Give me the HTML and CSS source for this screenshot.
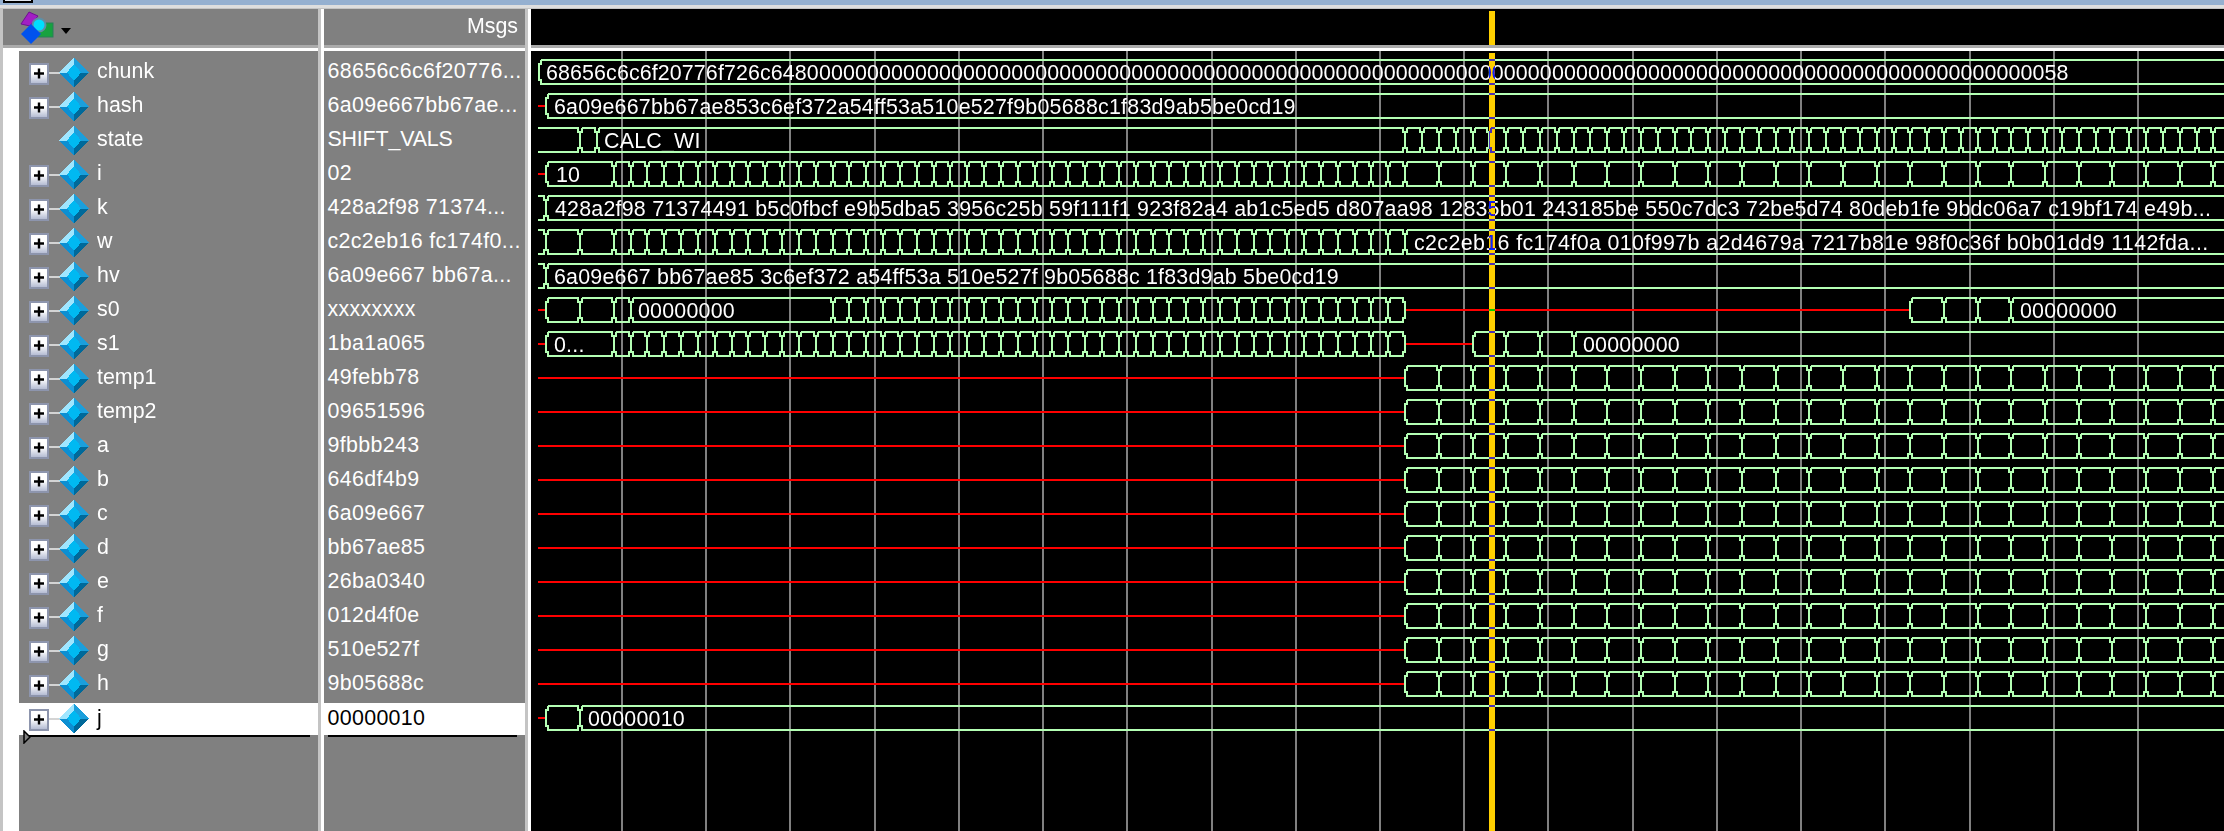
FILE: index.html
```html
<!DOCTYPE html>
<html lang="en">
<head>
    <meta charset="UTF-8">
    <title>Wave</title>
    <link rel="stylesheet" href="styles.css">
</head>
<body>
    <svg class="defs">
        <defs>
            <linearGradient id="boxFill" x1="0" y1="0" x2="0" y2="1">
                <stop offset="0.45" stop-color="#ffffff"/>
                <stop offset="1" stop-color="#aeb6cf"/>
            </linearGradient>
            <symbol id="gem" viewBox="0 0 60 34">
                <g shape-rendering="crispEdges">
                    <polygon points="45,2 30,17.5 38,17.5 45,9" fill="#9fe6ff"/>
                    <polygon points="45,2 60,17.5 52,17.5 45,9" fill="#1b9fdc"/>
                    <polygon points="30,17.5 45,33 45,26 38,17.5" fill="#0d8fd2"/>
                    <polygon points="60,17.5 45,33 45,26 52,17.5" fill="#00699a"/>
                    <polygon points="45,9 52,17.5 45,26 38,17.5" fill="#00b9f2"/>
                </g>
            </symbol>
            <symbol id="gem-plus" viewBox="0 0 60 34">
                <rect x="20" y="17" width="11" height="2" fill="#d4d4d4"/>
                <rect x="1" y="9" width="18" height="20" fill="url(#boxFill)" stroke="#8d95ad" stroke-width="2"/>
                <path d="M5 18.5H15M10 13.5V23.5" stroke="#000" stroke-width="2.4" fill="none"/>
                <use href="#gem"/>
            </symbol>
        </defs>
    </svg>

    <div class="titlebar"><div class="tab"></div></div>

    <div class="panes">
        <section class="col col-names">
            <header class="col-head">
                <svg class="layers" width="56" height="36" viewBox="18 9 56 36">
                    <polygon points="21,23 29,11 38,15 30,25" fill="#a21fc4" stroke="#6d1290"/>
                    <rect x="38" y="22" width="15" height="14" fill="#17a23f" stroke="#2a7f58"/>
                    <circle cx="39" cy="24" r="6.5" fill="#00dfff" stroke="#5f8ea5" stroke-width="2"/>
                    <polygon points="31,23 41,33 31,43 21,33" fill="#0052ee"/>
                    <polygon points="61,27 71,27 66,33" fill="#000"/>
                </svg>
            </header>
            <div class="rule"></div>
            <div class="rows">
                <div class="row"><svg class="sig"><use href="#gem-plus"/></svg>chunk</div>
                <div class="row"><svg class="sig"><use href="#gem-plus"/></svg>hash</div>
                <div class="row"><svg class="sig"><use href="#gem"/></svg>state</div>
                <div class="row"><svg class="sig"><use href="#gem-plus"/></svg>i</div>
                <div class="row"><svg class="sig"><use href="#gem-plus"/></svg>k</div>
                <div class="row"><svg class="sig"><use href="#gem-plus"/></svg>w</div>
                <div class="row"><svg class="sig"><use href="#gem-plus"/></svg>hv</div>
                <div class="row"><svg class="sig"><use href="#gem-plus"/></svg>s0</div>
                <div class="row"><svg class="sig"><use href="#gem-plus"/></svg>s1</div>
                <div class="row"><svg class="sig"><use href="#gem-plus"/></svg>temp1</div>
                <div class="row"><svg class="sig"><use href="#gem-plus"/></svg>temp2</div>
                <div class="row"><svg class="sig"><use href="#gem-plus"/></svg>a</div>
                <div class="row"><svg class="sig"><use href="#gem-plus"/></svg>b</div>
                <div class="row"><svg class="sig"><use href="#gem-plus"/></svg>c</div>
                <div class="row"><svg class="sig"><use href="#gem-plus"/></svg>d</div>
                <div class="row"><svg class="sig"><use href="#gem-plus"/></svg>e</div>
                <div class="row"><svg class="sig"><use href="#gem-plus"/></svg>f</div>
                <div class="row"><svg class="sig"><use href="#gem-plus"/></svg>g</div>
                <div class="row"><svg class="sig"><use href="#gem-plus"/></svg>h</div>
                <div class="row sel"><svg class="sig"><use href="#gem-plus"/></svg>j</div>
                <div class="drop-line"></div>
                <svg class="drop-mark" width="8" height="14" viewBox="0 0 8 14"><polygon points="1,1 7,7 1,13" fill="#808080" stroke="#000" stroke-width="1.5"/></svg>
            </div>
        </section>
        <div class="sash"></div>
        <section class="col col-values">
            <header class="col-head msgs">Msgs</header>
            <div class="rule"></div>
            <div class="rows">
                <div class="row">68656c6c6f20776...</div>
                <div class="row">6a09e667bb67ae...</div>
                <div class="row caps">SHIFT_VALS</div>
                <div class="row">02</div>
                <div class="row">428a2f98 71374...</div>
                <div class="row">c2c2eb16 fc174f0...</div>
                <div class="row">6a09e667 bb67a...</div>
                <div class="row">xxxxxxxx</div>
                <div class="row">1ba1a065</div>
                <div class="row">49febb78</div>
                <div class="row">09651596</div>
                <div class="row">9fbbb243</div>
                <div class="row">646df4b9</div>
                <div class="row">6a09e667</div>
                <div class="row">bb67ae85</div>
                <div class="row">26ba0340</div>
                <div class="row">012d4f0e</div>
                <div class="row">510e527f</div>
                <div class="row">9b05688c</div>
                <div class="row sel">00000010</div>
                <div class="drop-line"></div>
            </div>
        </section>
        <div class="sash"></div>
        <section class="col col-wave">
            <header class="wave-head"><div class="cursor-top"></div></header>
            <div class="rule"></div>
            <svg id="wave" width="1693" height="780" viewBox="531 51 1693 780"></svg>
        </section>
    </div>

    <script src="script.js"></script>
</body>
</html>
```

FILE: styles.css
```css
body {
    margin: 0;
    width: 2224px;
    height: 831px;
    overflow: hidden;
    background-color: #c4c4c4;
    font-family: "Liberation Sans", Arial, sans-serif;
    font-size: 21.4px;
    color: #fff;
}
.defs {
    position: absolute;
    width: 0;
    height: 0;
}
.titlebar {
    height: 5px;
    background-color: #95b0d0;
    border-bottom: 3px solid #dedede;
    margin-bottom: 1px;
}
.tab {
    width: 26px;
    height: 1px;
    margin-left: 3px;
    background-color: #dfe6ee;
    border: 2px solid #000;
    border-top: none;
}
.panes {
    display: flex;
    height: 822px;
    padding-left: 3px;
}
.col {
    display: flex;
    flex-direction: column;
}
.col-names {
    width: 316px;
    background-color: #fff;
}
.col-values {
    width: 201px;
    letter-spacing: 0.35px;
}
.col-wave {
    width: 1693px;
    background-color: #000;
}
.sash {
    box-sizing: border-box;
    width: 6px;
    background-color: #fff;
    border-left: 3px solid #c4c4c4;
}
.col-head {
    display: flex;
    align-items: center;
    height: 36px;
    background-color: #808080;
}
.layers {
    margin-left: 15px;
    margin-top: 1px;
}
.msgs {
    justify-content: flex-end;
    padding-right: 7px;
    padding-bottom: 2px;
    box-sizing: border-box;
    letter-spacing: 0;
}
.wave-head {
    height: 36px;
    background-color: #000;
    padding-left: 958px;
    padding-top: 2px;
    box-sizing: border-box;
}
.cursor-top {
    width: 6px;
    height: 34px;
    background-color: #ffd000;
}
.rule {
    height: 3px;
    background-color: #ababab;
    border-bottom: 3px solid #fff;
}
.rows {
    position: relative;
    flex: 1;
    padding-top: 4px;
    background-color: #808080;
}
.col-names .rows {
    margin-left: 16px;
}
.row {
    display: flex;
    align-items: center;
    box-sizing: border-box;
    height: 34px;
    padding-bottom: 2px;
    white-space: nowrap;
}
.col-names .row {
    padding-left: 10px;
}
.col-values .row {
    padding-left: 3px;
}
.col-values .caps {
    letter-spacing: -0.15px;
}
.sig {
    flex: none;
    align-self: flex-start;
    width: 60px;
    height: 34px;
    margin-right: 8px;
}
.row.sel {
    height: 32px;
    margin-top: 2px;
    background-color: #fff;
    color: #000;
}
.sel .sig {
    margin-top: -2px;
}
.drop-line {
    height: 2px;
    margin: 0 8px 0 4px;
    background-color: #000;
}
.col-names .drop-line {
    margin: 0 8px;
}
.drop-mark {
    position: absolute;
    left: 4px;
    top: 679px;
}
#wave {
    display: block;
}
#wave text {
    font-family: "Liberation Sans", Arial, sans-serif;
    font-size: 21.4px;
    fill: #fff;
    letter-spacing: 0.22px;
}
#wave text.dense {
    letter-spacing: 0.12px;
}
#wave text.wide {
    letter-spacing: 0.38px;
}
.gridline {
    fill: #808080;
}
.bus {
    fill: none;
    stroke: #b4ffb4;
    stroke-width: 2;
    shape-rendering: crispEdges;
}
.undriven {
    stroke: #ff0000;
    stroke-width: 2;
    shape-rendering: crispEdges;
}
.cursor {
    fill: #ffd000;
    mix-blend-mode: difference;
}
```

FILE: script.js
```js
var LEFT = 538;
var RIGHT = 2226;
var svg = document.getElementById("wave");

// clock edge number to x position
function T(n) {
    return Math.round(630.5 + 16.84 * n);
}

// edges from n to m, every step clocks
function edges(n, m, step) {
    var list = [];
    for (var i = n; i <= m; i += step) {
        list.push(T(i));
    }
    return list;
}

function add(tag, attrs, text) {
    var el = document.createElementNS("http://www.w3.org/2000/svg", tag);
    for (var key in attrs) {
        el.setAttribute(key, attrs[key]);
    }
    if (text) {
        el.textContent = text;
    }
    svg.appendChild(el);
}

// one bus value, flared at both ends unless it runs off the pane
function cell(from, to, top, capLeft, capRight) {
    var bot = top + 24;
    var d = "";
    if (capLeft) {
        d += "M" + (from + 2) + " " + top;
    } else {
        d += "M" + from + " " + top;
    }
    if (capRight) {
        d += "H" + (to - 2) + "V" + (top + 4) + "H" + to + "V" + (bot - 4) + "H" + (to - 2) + "V" + bot;
    } else {
        d += "H" + to + "M" + to + " " + bot;
    }
    if (capLeft) {
        d += "H" + (from + 2) + "V" + (bot - 4) + "H" + from + "V" + (top + 4) + "H" + (from + 2) + "V" + top;
    } else {
        d += "H" + from;
    }
    add("path", { "class": "bus", d: d });
}

function drawRow(index, row) {
    var mid = 72 + 34 * index;
    var top = mid - 12;
    (row.texts || []).forEach(function (t) {
        add("text", { x: t[0], y: mid + 8, "class": t[2] || "" }, t[1]);
    });
    (row.red || []).forEach(function (r) {
        add("line", { "class": "undriven", x1: r[0], x2: r[1], y1: mid, y2: mid });
    });
    (row.buses || []).forEach(function (list) {
        var openLeft = list[0] === LEFT;
        var openRight = list[list.length - 1] === RIGHT;
        for (var i = 0; i < list.length - 1; i++) {
            cell(list[i], list[i + 1], top, !(openLeft && i === 0), !(openRight && i === list.length - 2));
        }
    });
}

var chunkText = "68656c6c6f20776f726c6480".padEnd(126, "0") + "58";
var regTail = [[LEFT, T(46)]];
var regBus = [edges(46, 101, 2).concat([RIGHT])];

var rows = [
    { texts: [[546, chunkText, "dense"]], buses: [[LEFT + 1, RIGHT]] },
    { texts: [[554, "6a09e667bb67ae853c6ef372a54ff53a510e527f9b05688c1f83d9ab5be0cd19"]], red: [[LEFT, 546]], buses: [[546, RIGHT]] },
    { texts: [[604, "CALC_WI"]], buses: [[LEFT, T(-3), T(-2)].concat(edges(46, 101, 1), [RIGHT])] },
    { texts: [[556, "10"]], red: [[LEFT, 546]], buses: [[546].concat(edges(-1, 46, 1), edges(48, 101, 2), [RIGHT])] },
    { texts: [[555, "428a2f98 71374491 b5c0fbcf e9b5dba5 3956c25b 59f111f1 923f82a4 ab1c5ed5 d807aa98 12835b01 243185be 550c7dc3 72be5d74 80deb1fe 9bdc06a7 c19bf174 e49b..."]], buses: [[LEFT, 546, RIGHT]] },
    { texts: [[1414, "c2c2eb16 fc174f0a 010f997b a2d4679a 7217b81e 98f0c36f b0b01dd9 1142fda...", "wide"]], buses: [[LEFT, 546, T(-3)].concat(edges(-1, 46, 1), [RIGHT])] },
    { texts: [[554, "6a09e667 bb67ae85 3c6ef372 a54ff53a 510e527f 9b05688c 1f83d9ab 5be0cd19"]], buses: [[LEFT, 546, RIGHT]] },
    { texts: [[638, "00000000"], [2020, "00000000"]], red: [[LEFT, 546], [T(46), T(76)]], buses: [[546, T(-3), T(-1), T(0)].concat(edges(12, 46, 1)), [T(76), T(78), T(80), T(82), RIGHT]] },
    { texts: [[554, "0..."], [1583, "00000000"]], red: [[LEFT, 546], [T(46), T(50)]], buses: [[546].concat(edges(-1, 46, 1)), [T(50), T(52), T(54), T(56), RIGHT]] }
];
for (var r = 0; r < 10; r++) {
    rows.push({ red: regTail, buses: regBus });
}
rows.push({ texts: [[588, "00000010"]], red: [[LEFT, 546]], buses: [[546, T(-3), RIGHT]] });

// time grid goes under everything else
for (var k = 0; k <= 18; k++) {
    add("rect", { "class": "gridline", x: Math.round(621 + 84.22 * k), y: 51, width: 2, height: 780 });
}
rows.forEach(function (row, i) {
    drawRow(i, row);
});
add("rect", { "class": "cursor", x: 1489, y: 53, width: 6, height: 778 });
```
